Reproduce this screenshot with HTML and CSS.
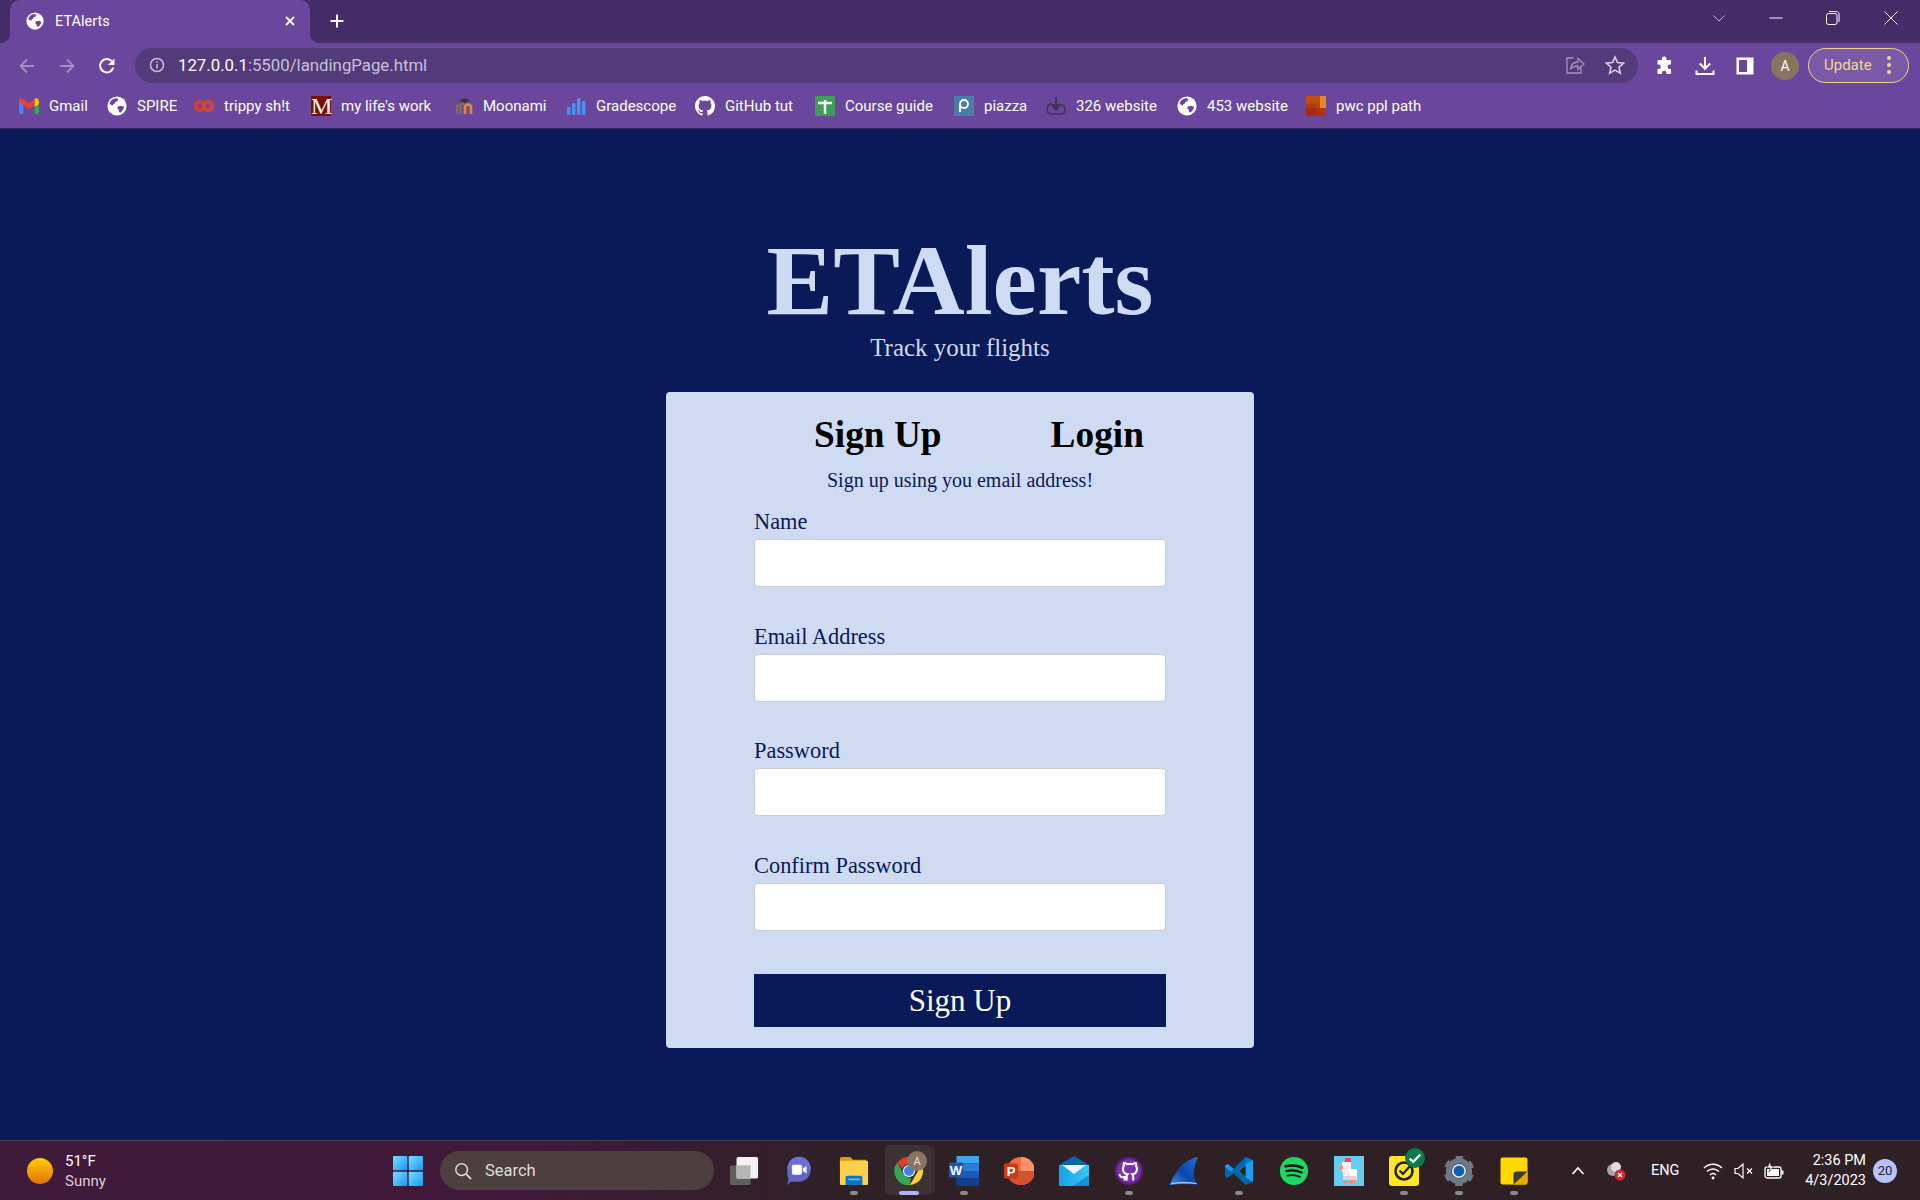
FILE: index.html
```html
<!DOCTYPE html>
<html lang="en">
<head>
<meta charset="utf-8">
<title>ETAlerts</title>
<link rel="stylesheet" href="styles.css">
</head>
<body>
<div class="tabstrip">
  <div class="tab">
    <svg class="tab-globe" viewBox="0 0 24 24"><circle cx="12" cy="12" r="11.500" fill="#fff"/><path fill="#6a479d" d="M5 5.500c2-2 5-3 7.500-2.600l1 1.600-1.500 2.200-2 .6-.6 1.700-2 .9v1.600l-2.600-.6L3 8.500zM13 12.500l4-.8 3.500 1.300c-.4 3-2.200 5.300-4.200 6.700l-1.800-.4-.5-3-1.800-1.500z"/></svg>
    <span class="tab-title">ETAlerts</span>
    <svg class="tab-close" viewBox="0 0 12 12"><path d="M2 2l8 8M10 2l-8 8" stroke="#fff" stroke-width="1.800" fill="none"/></svg>
  </div>
  <svg class="new-tab" viewBox="0 0 16 16"><path d="M8 1.500v13M1.500 8h13" stroke="#fff" stroke-width="2" fill="none"/></svg>
  <div class="win-controls">
    <svg class="win-btn chev" viewBox="0 0 16 16"><path d="M1.500 5l6.500 6.500L14.500 5" stroke="#d5cce3" stroke-width="1" fill="none"/></svg>
    <svg class="win-btn min" viewBox="0 0 16 16"><path d="M1.500 8h13" stroke="#fff" stroke-width="1" fill="none"/></svg>
    <svg class="win-btn rest" viewBox="0 0 16 16"><rect x="1.500" y="3.500" width="10.500" height="11" rx="2" stroke="#fff" fill="none"/><path d="M4 1.500h7.500c1.500 0 2.500 1 2.500 2.500v8" stroke="#fff" fill="none"/></svg>
    <svg class="win-btn close" viewBox="0 0 16 16"><path d="M1.500 1.500l13 13M14.500 1.500l-13 13" stroke="#fff" stroke-width="1" fill="none"/></svg>
  </div>
</div>

<div class="toolbar">
  <div class="tool"><svg viewBox="0 0 20 20"><path d="M17 10H4M10 3.500L3.500 10l6.500 6.500" stroke="#a590c4" stroke-width="1.800" fill="none"/></svg></div>
  <div class="tool"><svg viewBox="0 0 20 20"><path d="M3 10h13M10 3.500l6.500 6.500-6.500 6.500" stroke="#a590c4" stroke-width="1.800" fill="none"/></svg></div>
  <div class="tool"><svg viewBox="0 0 20 20"><path d="M16.300 11.500A6.700 6.700 0 1 1 14.800 5.200" stroke="#fff" stroke-width="2" fill="none"/><path d="M17.500 2.500v6.500H11z" fill="#fff"/></svg></div>
  <div class="omnibox">
    <svg class="omni-info" viewBox="0 0 16 16"><circle cx="8" cy="8" r="6.500" stroke="#c9c0d8" stroke-width="1.500" fill="none"/><path d="M8 7v4.500M8 4.300v1.500" stroke="#c9c0d8" stroke-width="1.500"/></svg>
    <span class="url"><span class="url-host">127.0.0.1</span>:5500/landingPage.html</span>
    <svg class="omni-act" viewBox="0 0 20 20"><path d="M8.500 3H2v15h14v-5" stroke="#a594bc" stroke-width="1.300" fill="none"/><path d="M5.500 14.500C6 9.500 9 7 13 7V3.500l6 5.500-6 5.500V11c-3.500 0-5.800 1-7.500 3.500z" stroke="#a594bc" stroke-width="1.300" fill="none"/></svg>
    <svg class="omni-act star" viewBox="0 0 20 20"><path d="M10 2l2.500 5.600 6 .6-4.500 4 1.300 6L10 15.100l-5.300 3.100 1.300-6-4.500-4 6-.6z" stroke="#d9d2e4" stroke-width="1.600" fill="none"/></svg>
  </div>
  <div class="tools-right">
    <div class="tool"><svg viewBox="0 0 20 20"><path fill="#fff" d="M7 2a2.400 2.400 0 0 1 4.600 1v1H16v4.400h-1.200a2.300 2.300 0 1 0 0 4.600H16v5h-4.500v-1a2.300 2.300 0 1 0-4.600 0v1H2.500v-5h1a2.300 2.300 0 1 0 0-4.600h-1V4H7z"/></svg></div>
    <div class="tool"><svg viewBox="0 0 20 20"><path d="M10 1v11M4.800 7.500L10 12.800l5.200-5.300M1.500 14.500v3.500h17v-3.500" stroke="#fff" stroke-width="2" fill="none"/></svg></div>
    <div class="tool"><svg viewBox="0 0 20 20"><path fill="#fff" fill-rule="evenodd" d="M1.500 1.500h17v17h-17zM4 4v12h8V4z"/></svg></div>
    <div class="tool"><span class="avatar">A</span></div>
    <div class="update"><span>Update</span><span class="update-dots"><i></i><i></i><i></i></span></div>
  </div>
</div>

<div class="bookmarks">
  <div class="bm"><svg viewBox="0 0 20 16"><path fill="#4285f4" d="M0 3v11.500c0 .8.600 1.500 1.400 1.500h3V7z"/><path fill="#34a853" d="M15.600 7v9h3c.8 0 1.400-.7 1.400-1.500V6z"/><path fill="#ea4335" d="M4.400 7L0 3.500C0 1 2.500-.6 4.400 1L10 5.500 15.600 1 15.600 7 10 11.200z"/><path fill="#fbbc04" d="M15.600 1C17.500-.6 20 1 20 3.500V6l-4.400 3z"/></svg><span>Gmail</span></div>
  <div class="bm"><svg viewBox="0 0 24 24"><circle cx="12" cy="12" r="11.500" fill="#fff"/><path fill="#6a479d" d="M5 5.500c2-2 5-3 7.500-2.600l1 1.600-1.500 2.200-2 .6-.6 1.700-2 .9v1.600l-2.600-.6L3 8.500zM13 12.500l4-.8 3.500 1.300c-.4 3-2.200 5.300-4.200 6.700l-1.800-.4-.5-3-1.800-1.500z"/></svg><span>SPIRE</span></div>
  <div class="bm"><svg viewBox="0 0 20 14"><circle cx="6" cy="7" r="4.200" stroke="#c8403a" stroke-width="4" fill="none"/><circle cx="14" cy="7" r="4.200" stroke="#d0453c" stroke-width="4" fill="none"/></svg><span>trippy sh!t</span></div>
  <div class="bm"><span class="ico-m">M</span><span>my life's work</span></div>
  <div class="bm"><svg viewBox="0 0 20 20"><path d="M6 4.500L12 2l5 2.500-5 2.500z" fill="#35303a" opacity=".85"/><path d="M4 18v-6.500c0-3 3.500-3 3.500 0V18M7.500 10.500c0-3.500 4.500-3 4.500 0V18" stroke="#8a6c52" stroke-width="2.400" fill="none"/><path d="M12 18v-6.500c0-4 6-4 6 0V18" stroke="#e08a30" stroke-width="2.600" fill="none"/></svg><span>Moonami</span></div>
  <div class="bm"><svg viewBox="0 0 20 20"><g fill="#4d8fef"><rect x="1" y="11" width="3.500" height="8" rx="1"/><rect x="6" y="7" width="3.500" height="12" rx="1"/><rect x="11" y="2" width="3.500" height="17" rx="1"/><rect x="16" y="5" width="3.500" height="14" rx="1"/></g></svg><span>Gradescope</span></div>
  <div class="bm"><svg viewBox="0 0 16 16"><path fill="#fff" fill-rule="evenodd" d="M8 0C3.580 0 0 3.580 0 8c0 3.540 2.290 6.530 5.470 7.590.4.070.55-.17.55-.38 0-.19-.01-.82-.01-1.490-2.010.37-2.530-.49-2.690-.94-.09-.23-.48-.94-.82-1.130-.28-.15-.68-.52-.01-.53.63-.01 1.080.58 1.230.82.720 1.210 1.870.87 2.330.66.070-.52.28-.87.51-1.070-1.780-.2-3.640-.89-3.640-3.950 0-.87.31-1.590.82-2.150-.08-.2-.36-1.020.08-2.120 0 0 .67-.21 2.200.82.64-.18 1.320-.27 2-.27.68 0 1.360.09 2 .27 1.530-1.040 2.200-.82 2.200-.82.44 1.100.16 1.920.08 2.120.51.56.82 1.270.82 2.150 0 3.070-1.870 3.750-3.650 3.950.29.25.54.73.54 1.480 0 1.070-.01 1.930-.01 2.200 0 .21.15.46.55.38A8.013 8.013 0 0 0 16 8c0-4.420-3.580-8-8-8z"/></svg><span>GitHub tut</span></div>
  <div class="bm"><svg viewBox="0 0 20 20"><rect width="20" height="20" rx="1.500" fill="#3f9d55"/><path d="M3 7h14M10 4v14" stroke="#fff" stroke-width="2.400"/></svg><span>Course guide</span></div>
  <div class="bm"><svg viewBox="0 0 20 20"><rect width="20" height="20" fill="#4a7ea8"/><circle cx="10" cy="8" r="4" stroke="#fff" stroke-width="1.800" fill="none"/><path d="M6 8v8" stroke="#fff" stroke-width="1.800"/></svg><span>piazza</span></div>
  <div class="bm"><svg viewBox="0 0 20 20"><path d="M6 7.500C3 8 1 10 1 13c0 3 2 5 5 5h9c2.500 0 4-2 4-4.500S17 9 14 8.500" stroke="#403558" stroke-width="1.700" fill="none"/><path d="M10 1v12M6 9l4 4.500L14 9z" stroke="#403558" stroke-width="2" fill="#403558"/></svg><span>326 website</span></div>
  <div class="bm"><svg viewBox="0 0 24 24"><circle cx="12" cy="12" r="11.500" fill="#fff"/><path fill="#6a479d" d="M5 5.500c2-2 5-3 7.500-2.600l1 1.600-1.500 2.200-2 .6-.6 1.700-2 .9v1.600l-2.600-.6L3 8.500zM13 12.500l4-.8 3.500 1.300c-.4 3-2.200 5.300-4.200 6.700l-1.800-.4-.5-3-1.800-1.500z"/></svg><span>453 website</span></div>
  <div class="bm"><svg viewBox="0 0 20 20"><rect width="20" height="20" fill="#c14e12"/><rect x="14" width="6" height="12" fill="#e08a2b"/><rect y="8" width="10" height="12" fill="#a8290f"/><rect x="10" y="12" width="10" height="8" fill="#b5300f"/><rect x="0" y="6" width="14" height="6" fill="#ad4711" opacity=".7"/></svg><span>pwc ppl path</span></div>
</div>

<main class="page">
  <h1 class="brand">ETAlerts</h1>
  <p class="tagline">Track your flights</p>
  <section class="card">
    <div class="card-tabs">
      <h2 class="card-tab">Sign Up</h2>
      <h2 class="card-tab">Login</h2>
    </div>
    <p class="card-note">Sign up using you email address!</p>
    <form class="form">
      <div class="field"><label class="field-label" for="n">Name</label><input class="field-input" id="n" type="text"></div>
      <div class="field"><label class="field-label" for="e">Email Address</label><input class="field-input" id="e" type="email"></div>
      <div class="field"><label class="field-label" for="p">Password</label><input class="field-input" id="p" type="password"></div>
      <div class="field"><label class="field-label" for="c">Confirm Password</label><input class="field-input" id="c" type="password"></div>
      <button class="submit" type="button">Sign Up</button>
    </form>
  </section>
</main>

<footer class="taskbar">
  <div class="weather">
    <span class="sun"></span>
    <div class="weather-text"><span class="temp">51°F</span><span class="cond">Sunny</span></div>
  </div>
  <div class="slot start"><svg viewBox="0 0 30 30"><defs><linearGradient id="wg" x1="0" y1="0" x2="1" y2="1"><stop offset="0" stop-color="#7fdcff"/><stop offset="1" stop-color="#0f9bf5"/></linearGradient></defs><rect x="0" y="0" width="14.300" height="14.300" rx="1" fill="url(#wg)"/><rect x="15.700" y="0" width="14.300" height="14.300" rx="1" fill="url(#wg)"/><rect x="0" y="15.700" width="14.300" height="14.300" rx="1" fill="url(#wg)"/><rect x="15.700" y="15.700" width="14.300" height="14.300" rx="1" fill="url(#wg)"/></svg></div>
  <div class="search">
    <svg viewBox="0 0 20 20"><circle cx="8.500" cy="8.500" r="6.500" stroke="#ddd" stroke-width="1.700" fill="none"/><path d="M13.300 13.300L19 19" stroke="#ddd" stroke-width="1.900"/></svg>
    <span>Search</span>
  </div>
  <div class="slot"><svg viewBox="0 0 32 32"><rect x="1" y="10" width="22" height="21" rx="2" fill="#5f5f5f"/><rect x="8" y="1" width="23" height="23" rx="2" fill="#f3f3f3"/><rect x="8" y="10" width="15" height="14" fill="#b5b5b5"/></svg></div>
  <div class="slot"><svg viewBox="0 0 32 36"><path fill="#6264c6" d="M16 1c8 0 14 6 14 15s-6 15-14 15H6l-4 4 1.500-8C1.800 25 2 20 2 16 2 7 8 1 16 1z"/><path fill="#6d6ed6" d="M16 1c8 0 14 6 14 15H2C2 7 8 1 16 1z"/><rect x="7.500" y="10.500" width="12" height="12" rx="2" fill="#fff"/><path d="M20.500 15l4.500-3v9l-4.500-3z" fill="#fff"/></svg></div>
  <div class="slot has-dot"><svg viewBox="0 0 32 32"><path fill="#d99a0c" d="M1 3c0-1 .6-2 2-2h9l3 3h14v6H1z"/><rect x="1" y="5" width="30" height="26" rx="1.500" fill="#fcd24c"/><path fill="#0f74c4" d="M7 31v-8c0-1 1-2 2-2h14c1 0 2 1 2 2v8z"/><rect x="10" y="24" width="12" height="1.800" fill="#57c1f2"/></svg><i class="dot"></i></div>
  <div class="slot active">
    <span class="active-bg"></span>
    <svg viewBox="0 0 32 32"><path fill="#e33b2e" d="M16 1a15 15 0 0 1 13 7.500H16a7.500 7.500 0 0 0-7 5L3.500 7A15 15 0 0 1 16 1z"/><path fill="#fdd13d" d="M29 8.500A15 15 0 0 1 17 31l6.500-11.200a7.500 7.500 0 0 0-1-11.300z"/><path fill="#35a853" d="M3.500 7l6.300 11A7.500 7.500 0 0 0 18 23.300L17 31A15 15 0 0 1 3.500 7z"/><circle cx="16" cy="16" r="6.500" fill="#fff"/><circle cx="16" cy="16" r="5.300" fill="#3b82ec"/></svg>
    <span class="chrome-badge">A</span>
    <i class="dot dot-active"></i>
  </div>
  <div class="slot has-dot"><svg viewBox="0 0 32 32"><rect x="8" width="24" height="8" fill="#41a5ee"/><rect x="8" y="8" width="24" height="8" fill="#2b7cd3"/><rect x="8" y="16" width="24" height="8" fill="#185abd"/><rect x="8" y="24" width="24" height="8" fill="#103f91"/><rect y="7" width="15" height="16" rx="1.500" fill="#1a56b8"/><text class="app-letter" x="7.500" y="20" text-anchor="middle">W</text></svg><i class="dot"></i></div>
  <div class="slot"><svg viewBox="0 0 32 32"><circle cx="18" cy="16" r="15" fill="#ed6c47"/><path fill="#ff8f6b" d="M18 1a15 15 0 0 1 15 15H18z"/><path fill="#d35230" d="M18 16h15a15 15 0 0 1-15 15 15 15 0 0 1-15-15z"/><rect y="8" width="15" height="16" rx="1.500" fill="#c43e1c"/><text class="app-letter" x="7.500" y="21" text-anchor="middle">P</text></svg></div>
  <div class="slot"><svg viewBox="0 0 30 30"><defs><linearGradient id="mail" x1="0" y1="0" x2="1" y2="0"><stop offset="0" stop-color="#1aa3e8"/><stop offset="1" stop-color="#35c6f5"/></linearGradient></defs><path fill="#0a64b0" d="M15 0L0 9v3h30V9z"/><rect y="9" width="30" height="21" fill="url(#mail)"/><path fill="#1a8fd6" d="M30 30H14L30 19z"/><path fill="#eef3f7" d="M3 9h24L15 18z"/></svg></div>
  <div class="slot has-dot"><svg viewBox="0 0 32 32"><circle cx="16" cy="16" r="15" fill="#5d1f82"/><circle cx="16" cy="16" r="12.500" fill="#7c33a8"/><path d="M11.500 26v-3.500c-4 1-5-1-6-3M20.500 26v-4c0-1-.5-2-1-2.500 3-.5 5-2 5-6 0-1.300-.5-2.300-1-3 .3-1 .2-2.300-.2-3-1 0-2.300.5-3.300 1.300-1.600-.4-4.400-.4-6 0-1-.8-2.300-1.300-3.300-1.300-.4.7-.5 2-.2 3-.5.7-1 1.700-1 3 0 4 2 5.500 5 6-.5.5-1 1.500-1 2.500v4" stroke="#fff" stroke-width="2.200" fill="none"/></svg><i class="dot"></i></div>
  <div class="slot"><svg viewBox="0 0 30 30"><defs><linearGradient id="fin" x1="0" y1="1" x2="1" y2="0"><stop offset="0" stop-color="#3d8df0"/><stop offset=".45" stop-color="#0a45ad"/><stop offset="1" stop-color="#1f6fd8"/></linearGradient></defs><path fill="url(#fin)" d="M29 1C21 2 12 8 7 17 4 21 2 25 1 29c9-1.500 19-1.500 28 0-3-4-5-8-4-14 .5-5 2-10 4-14z"/><path d="M2.500 27.500c8-1.200 17-1.200 25 0" stroke="#a8d4ff" stroke-width="1.200" fill="none"/></svg></div>
  <div class="slot has-dot"><svg viewBox="0 0 32 32"><path fill="#0065a9" d="M23 1l8 3.500v23L23 31 10 18.500 4 23.500l-3-2v-11l3-2 6 5z"/><path fill="#007acc" d="M23 1l8 3.500V16H23z"/><path fill="#1f9cf0" d="M23 9L14 16l9 7 8 4.500v-23zM1 10.500L4 8.500l6 5-3 3-6-5z"/><path fill="#0f6ab0" d="M23 9v14l-9-7z"/><path fill="#2b2423" d="M23 10.500v11L15.800 16z"/></svg><i class="dot"></i></div>
  <div class="slot"><svg viewBox="0 0 32 32"><circle cx="16" cy="16" r="15" fill="#1ed760"/><g stroke="#111" stroke-linecap="round" fill="none"><path d="M7 11c6-1.500 12-1.200 18 1.500" stroke-width="2.800"/><path d="M8 16c5-1.200 11-.8 16 1.500" stroke-width="2.400"/><path d="M9 21c4.500-1 9-.7 13.500 1.200" stroke-width="2"/></g></svg></div>
  <div class="slot"><svg viewBox="0 0 30 30"><rect width="30" height="30" fill="#66cdee"/><rect x="11" y="2" width="6" height="5" fill="#ea4a6b"/><rect x="8" y="6" width="9" height="10" fill="#fdeef2"/><rect x="6" y="10" width="3" height="3" fill="#f0906a"/><rect x="9" y="14" width="14" height="10" fill="#fbe9ee"/><rect x="15" y="13" width="8" height="7" fill="#fff"/><rect x="9" y="20" width="13" height="4" fill="#efc9d6"/><rect x="9" y="25" width="5" height="2" fill="#f08a6a"/><rect x="16" y="24" width="5" height="3" fill="#f08a6a"/></svg></div>
  <div class="slot has-dot norton"><svg viewBox="0 0 30 30"><rect width="30" height="30" rx="3" fill="#ffe524"/><circle cx="15" cy="15" r="8.500" stroke="#222" stroke-width="2.600" fill="none"/><path d="M10.500 14.500l3.500 3.500 7-8" stroke="#222" stroke-width="2.200" fill="none"/></svg><span class="norton-badge"><svg viewBox="0 0 12 12"><path d="M1.500 6.500l3 2.800L10.500 3" stroke="#fff" stroke-width="2" fill="none"/></svg></span><i class="dot"></i></div>
  <div class="slot has-dot"><svg viewBox="0 0 32 32"><circle cx="16" cy="16" r="11" stroke="#6b7885" stroke-width="6" fill="none"/><circle cx="16" cy="16" r="14" stroke="#6b7885" stroke-width="4.500" stroke-dasharray="7.330 7.330" transform="rotate(15 16 16)" fill="none"/><circle cx="16" cy="16" r="7.500" fill="#f0f3f6"/><circle cx="16" cy="16" r="5.800" fill="#0c5fb3"/></svg><i class="dot"></i></div>
  <div class="slot has-dot"><svg viewBox="-1.500 -1.500 30 30"><rect width="27" height="27" rx="2" fill="#ffd800"/><path fill="#e8ac00" d="M13 27L27 13v12a2 2 0 0 1-2 2z"/><path fill="#3b3a36" d="M13 27V17a3 3 0 0 1 3-3h11z"/></svg><i class="dot"></i></div>
  <div class="tray">
    <svg class="tray-chev" viewBox="0 0 14 10"><path d="M1.500 8L7 2l5.500 6" stroke="#fff" stroke-width="1.700" fill="none"/></svg>
    <span class="tray-cloud"><svg viewBox="0 0 20 20"><circle cx="7" cy="9" r="6" fill="#a7a7a7"/><circle cx="10" cy="6" r="5" fill="#dcdcdc"/><circle cx="14" cy="14" r="5.500" fill="#d9232e"/><path d="M12 12l4 4M16 12l-4 4" stroke="#fff" stroke-width="1.300"/></svg></span>
    <span class="tray-lang">ENG</span>
    <svg class="tray-wifi" viewBox="0 0 20 18"><g stroke="#fff" stroke-width="1.400" fill="none"><path d="M1 6c5-5 13-5 18 0"/><path d="M4 9.500c3.500-3.300 8.500-3.300 12 0"/><path d="M7 13c2-2 4-2 6 0"/></g><circle cx="10" cy="16" r="1.400" fill="#fff"/></svg>
    <svg class="tray-vol" viewBox="0 0 20 18"><path d="M1 6.500v5h3l5 4.500V2L4 6.500z" stroke="#fff" stroke-width="1.200" fill="none"/><path d="M13 6.500l5 5M18 6.500l-5 5" stroke="#fff" stroke-width="1.200"/></svg>
    <svg class="tray-bat" viewBox="0 0 20 18"><rect x="1" y="5" width="16" height="11" rx="2" stroke="#fff" stroke-width="1.300" fill="none"/><rect x="3" y="7" width="12" height="7" fill="#fff"/><rect x="17.500" y="8.500" width="2" height="4" fill="#fff"/><path d="M6 0L3 6h3l-1 4 5-6H7z" fill="#fff" stroke="#2e2025" stroke-width=".6"/></svg>
    <div class="clock"><span>2:36 PM</span><span>4/3/2023</span></div>
    <span class="notif">20</span>
  </div>
</footer>
</body>
</html>
```
FILE: styles.css
```css
* { box-sizing: border-box; }
html, body { margin: 0; height: 100%; }
body {
  width: 1920px;
  height: 1200px;
  overflow: hidden;
  display: flex;
  flex-direction: column;
  background: #0a1958;
  font-family: "Liberation Serif", "Times New Roman", serif;
}

/* Browser chrome */
.tabstrip {
  height: 43px;
  flex: none;
  display: flex;
  align-items: center;
  padding-left: 10px;
  background: #432c67;
  font-family: Roboto, "Noto Sans", sans-serif;
  color: #fff;
}
.tab {
  position: relative;
  width: 300px;
  height: 43px;
  display: flex;
  align-items: center;
  padding: 0 0 1px 16px;
  background: #6a479d;
  border-radius: 10px 10px 0 0;
}
.tab::before, .tab::after {
  content: "";
  position: absolute;
  bottom: 0;
  width: 10px;
  height: 10px;
}
.tab::before { left: -10px; background: radial-gradient(circle at 0 0, transparent 10px, #6a479d 10.5px); }
.tab::after { right: -10px; background: radial-gradient(circle at 100% 0, transparent 10px, #6a479d 10.5px); }
.tab-globe { width: 18px; height: 18px; }
.tab-title { margin-left: 11px; font-size: 14.500px; flex: 1; }
.tab-close { width: 12px; height: 12px; margin-right: 14px; }
.new-tab { width: 16px; height: 16px; margin-left: 19px; margin-bottom: 1px; }
.win-controls { margin-left: auto; display: flex; align-items: center; height: 36px; margin-top: -7px; padding-right: 21px; }
.win-btn { width: 16px; height: 16px; }
.chev { margin-right: 42px; width: 14px; height: 14px; }
.min { margin-right: 41px; }
.rest { margin-right: 42px; }

.toolbar {
  height: 42px;
  flex: none;
  display: flex;
  align-items: center;
  padding: 3px 0 0 7px;
  background: #6a479d;
  font-family: Roboto, "Noto Sans", sans-serif;
}
.tool { width: 40px; height: 36px; display: flex; align-items: center; justify-content: center; flex: none; }
.tool svg { width: 20px; height: 20px; }
.omnibox {
  width: 1503px;
  height: 35px;
  margin-left: 8px;
  display: flex;
  align-items: center;
  padding: 0 13px 2px 14px;
  border-radius: 18px;
  background: #533a7b;
  color: #c9c0d8;
  font-size: 16.800px;
}
.omni-info { width: 16px; height: 16px; flex: none; }
.url { margin-left: 13px; flex: 1; }
.url-host { color: #fff; }
.omni-act { width: 20px; height: 20px; flex: none; }
.star { margin-left: 20px; }
.tools-right { display: flex; align-items: center; margin-left: 7px; }
.avatar {
  width: 28px;
  height: 28px;
  border-radius: 50%;
  background: #8a7361;
  color: #fff;
  font-size: 14px;
  display: flex;
  align-items: center;
  justify-content: center;
}
.update {
  width: 101px;
  height: 35px;
  margin-left: 3px;
  display: flex;
  align-items: center;
  padding: 0 0 2px 15px;
  border: 1.500px solid #f0d28c;
  border-radius: 18px;
  background: #7a5aa6;
  color: #f4d68c;
  font-size: 15px;
}
.update-dots { display: flex; flex-direction: column; gap: 3px; margin-left: 15px; }
.update-dots i { width: 4px; height: 4px; border-radius: 50%; background: #f4d68c; }

.bookmarks {
  height: 44px;
  flex: none;
  display: grid;
  grid-template-columns: 88px 87px 117px 142px 113px 129px 120px 139px 92px 131px 129px 130px;
  align-items: center;
  padding: 0 0 1px 19px;
  background: #6a479d;
  border-bottom: 1px solid #32255f;
  color: #fff;
  font-family: Roboto, "Noto Sans", sans-serif;
  font-size: 15px;
}
.bm { display: flex; align-items: center; gap: 10px; white-space: nowrap; }
.bm svg { width: 20px; height: 20px; flex: none; }
.ico-m {
  width: 20px;
  height: 20px;
  background: #7a0f05;
  color: #fff;
  font-family: "Liberation Serif", serif;
  font-weight: 400;
  font-size: 24px;
  line-height: 20px;
  text-align: center;
}

/* Page */
.page {
  flex: 1;
  display: flex;
  flex-direction: column;
  align-items: center;
  padding-top: 98px;
  background: #0a1958;
}
.brand {
  margin: 0;
  font-size: 100px;
  line-height: 108px;
  font-weight: 700;
  color: #cfdbf3;
}
.tagline {
  margin: 0;
  font-size: 25px;
  line-height: 26px;
  color: #cfdbf3;
}
.card {
  width: 588px;
  height: 656px;
  margin-top: 31px;
  border-radius: 4px;
  background: #cfdbf3;
  display: flex;
  flex-direction: column;
  align-items: center;
}
.card-tabs { display: flex; gap: 109px; padding-left: 38px; margin-top: 20px; width: 100%; justify-content: center; }
.card-tab { margin: 0; font-size: 37.300px; line-height: 46px; color: #000; }
.card-note { margin: 11px 0 0; font-size: 20px; line-height: 23px; color: #0a1958; }
.form { width: 412px; margin-top: 17px; display: flex; flex-direction: column; }
.field { display: flex; flex-direction: column; margin-bottom: 36.500px; }
.field-label { font-size: 22.400px; line-height: 26px; color: #0a1958; margin-bottom: 4px; }
.field-input {
  height: 48px;
  width: 100%;
  border: 1px solid #c9ccd4;
  border-radius: 4px;
  background: #fff;
}
.submit {
  height: 53px;
  margin-top: 7px;
  border: 0;
  background: #0a1958;
  color: #fff;
  font-family: inherit;
  font-size: 31px;
}

/* Taskbar */
.taskbar {
  height: 60px;
  flex: none;
  display: flex;
  align-items: center;
  border-top: 1px solid #4c4050;
  background: linear-gradient(90deg, #3f1b3b 0%, #40193a 25%, #2e2126 45%, #2e2025 100%);
  font-family: Roboto, "Noto Sans", sans-serif;
  color: #fff;
}
.weather { width: 380px; display: flex; align-items: center; padding-left: 27px; flex: none; }
.sun { width: 26px; height: 26px; border-radius: 50%; background: linear-gradient(180deg, #ffd000, #e56f0a); }
.weather-text { display: flex; flex-direction: column; margin-left: 12px; font-size: 15px; line-height: 20px; }
.cond { color: #d8cfd8; }
.slot {
  position: relative;
  width: 55px;
  height: 59px;
  flex: none;
  display: flex;
  align-items: center;
  justify-content: center;
}
.slot > svg { width: 30px; height: 30px; position: relative; }
.search {
  width: 274px;
  height: 39px;
  margin-left: 5px;
  margin-right: 2px;
  flex: none;
  display: flex;
  align-items: center;
  gap: 13px;
  padding-left: 14px;
  border-radius: 20px;
  background: #4d3f3f;
  color: #ddd;
  font-size: 16.500px;
}
.search svg { width: 18px; height: 18px; }
.dot {
  position: absolute;
  left: 24px;
  bottom: 5px;
  width: 8px;
  height: 4px;
  border-radius: 2px;
  background: #8d8888;
}
.dot-active { left: 18px; width: 20px; background: #a9b8f5; }
.active-bg {
  position: absolute;
  left: 4px;
  top: 4px;
  width: 46px;
  height: 50px;
  border-radius: 5px;
  background: #3c3233;
  box-shadow: 5px 0 0 -1px #3a2e30;
}
.chrome-badge {
  position: absolute;
  left: 26px;
  top: 10px;
  width: 20px;
  height: 20px;
  border-radius: 50%;
  background: #8a7361;
  color: #e9e2da;
  font-size: 11px;
  display: flex;
  align-items: center;
  justify-content: center;
}
.norton-badge {
  position: absolute;
  left: 29px;
  top: 7px;
  width: 20px;
  height: 20px;
  border-radius: 50%;
  background: #0a7a4a;
  display: flex;
  align-items: center;
  justify-content: center;
}
.norton-badge svg { width: 14px; height: 14px; }
.app-letter { font-family: "Liberation Sans", sans-serif; font-weight: 700; font-size: 14px; fill: #fff; }
.tray { display: flex; align-items: center; flex: 1; margin-left: 30px; }
.tray-chev { width: 14px; height: 10px; }
.tray-cloud { margin-left: 21px; width: 20px; height: 20px; }
.tray-cloud svg { width: 20px; height: 20px; display: block; }
.tray-lang { margin-left: 25px; font-size: 14.500px; }
.tray-wifi { margin-left: 24px; width: 20px; height: 18px; }
.tray-vol { margin-left: 11px; width: 20px; height: 18px; }
.tray-bat { margin-left: 10px; width: 20px; height: 18px; }
.clock { margin-left: auto; display: flex; flex-direction: column; align-items: flex-end; font-size: 14.500px; line-height: 20px; }
.notif {
  width: 24px;
  height: 24px;
  margin: 0 23px 0 7px;
  border-radius: 50%;
  background: #b6c2f8;
  color: #222;
  font-size: 13px;
  display: flex;
  align-items: center;
  justify-content: center;
}
```
